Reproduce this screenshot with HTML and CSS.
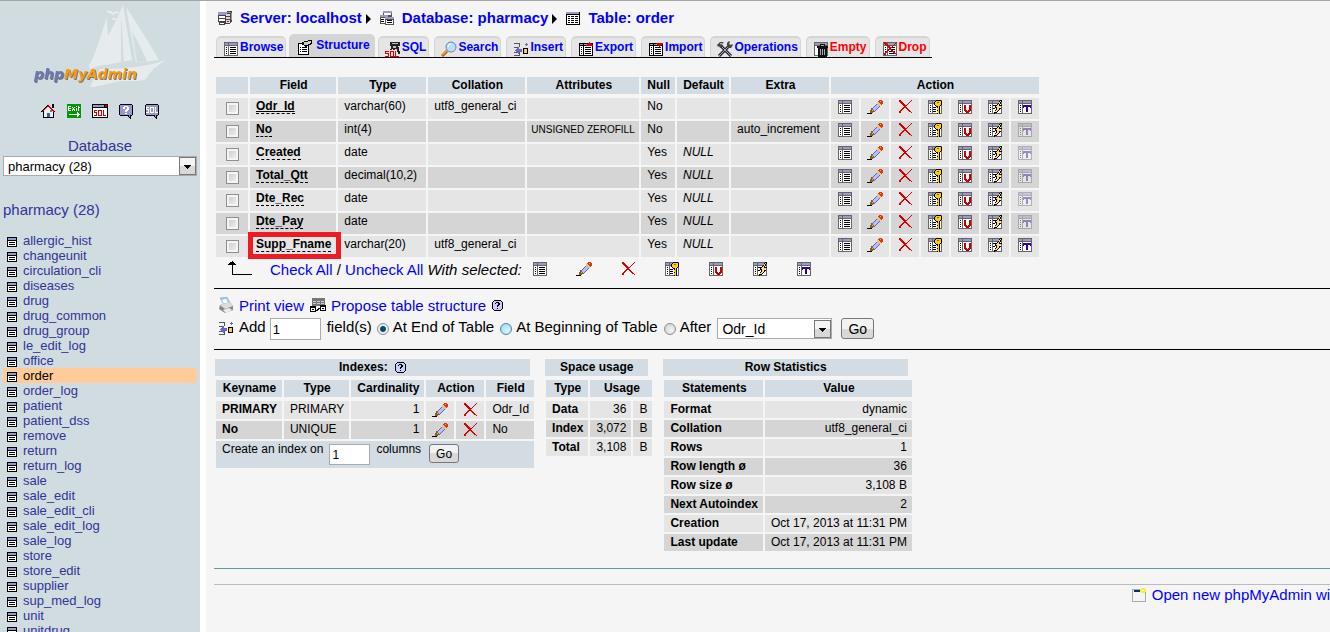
FILE: index.html
```html
<!DOCTYPE html>
<html lang="en">
<head>
  <meta charset="UTF-8">
  <meta name="viewport" content="width=device-width, initial-scale=1.0">
  <title>localhost / pharmacy / order | phpMyAdmin</title>
  <link rel="stylesheet" href="styles.css">
</head>
<body>
  <!-- icon set -->
  <svg class="sprite" aria-hidden="true">
    <symbol id="grid" viewBox="0 0 16 16">
      <path fill="#666" d="M1 1h14v14H1z"/>
      <path fill="#99c" d="M2 2h3v2H2zM6 2h8v2H6z"/>
      <path fill="#fff" d="M2 5h3v9H2zM6 5h8v9H6z"/>
      <path fill="#000" d="M3 6h1v1H3zM3 8h1v1H3zM3 10h1v1H3zM3 12h1v1H3z"/>
    </symbol>
    <symbol id="browse" viewBox="0 0 16 16">
      <use href="#grid"/>
      <path fill="#000" d="M7 6h6v1H7zM7 8h6v1H7zM7 10h6v1H7zM7 12h6v1H7z"/>
    </symbol>
    <symbol id="edit" viewBox="0 0 16 16">
      <path fill="#000" d="M0 14h5v1H0zM3 12h1v2H3z"/>
      <path fill="#856010" d="M4 9h1v1h1v1h1v1h1v1H6v1H3v-3h1z"/>
      <path fill="#e8b84c" d="M5 11h1v1H5z"/>
      <path fill="#669" d="M10 3h1v1h1v1h1v1h1v1h-1v1h-1v1h-1v1h-1v1H9v1H8v1H7v-1H6v-1H5V9h1V8h1V7h1V6h1V5h1z"/>
      <path fill="#bbf" d="M10 4h1v1h1v1h1v1h-1v1h-1v1h-1v1H9v1H8v1H7v-1H6V9h1V8h1V7h1V6h1z"/>
      <path fill="#fc3" d="M11 2h1v1h1v1h1v1h1v1h-1v1h-1V6h-1V5h-1V4h-1V3h1z"/>
      <path fill="#d43a1a" d="M12 1h3v1h1v3h-1v1h-1V5h-1V4h-1V3h-1V2h1z"/>
      <path fill="#f98" d="M13 2h1v1h-1z"/>
    </symbol>
    <symbol id="drop" viewBox="0 0 16 16">
      <path fill="#d00" d="M2 1h2v1h1v1h1v1h1v1h1v1h2V5h1V4h1V3h1V2h1V1h1v1h-1v1h-1v1h-1v1h-1v1h-1v1H9v1h1v1h1v1h1v1h1v1h1v1h-2v-1h-1v-1h-1v-1H9v-1H8V9H7v1H6v1H5v1H4v2H2v-2h1v-1h1v-1h1V9h1V8h1V7H6V6H5V5H4V4H3V3H2z"/>
      <path fill="#d00" d="M14 13h1v1h-1z"/>
    </symbol>
    <symbol id="primary" viewBox="0 0 16 16">
      <use href="#grid"/>
      <path fill="#000" d="M6 8h3v1H6zM6 10h3v1H6zM6 12h3v1H6z"/>
      <path fill="#000" d="M9 1h5v1h1v4h-1v1h-1v8h-3v-7H9V7H8V6H7V3h1V2h1z"/>
      <path fill="#fc0" d="M9 2h5v4h-1v1h-1v8h-1v-1h-1v-2h1v-1h-1V9h1V7H9V6H8V3h1z"/>
      <path fill="#856010" d="M10 3h2v1h-2z"/>
    </symbol>
    <symbol id="unique" viewBox="0 0 16 16">
      <use href="#grid"/>
      <path fill="#c00" d="M7 6h2v5h1v1h1v-1h1V6h2v6h-1v1h-1v1H9v-1H8v-1H7z"/>
    </symbol>
    <symbol id="index" viewBox="0 0 16 16">
      <use href="#grid"/>
      <path fill="#000" d="M6 6h4v1H6zM6 9h2v1H6z"/>
      <path fill="#000" d="M13 1h2v2h-1v2h-1v1h2v1h-1v1h-1v1h1v1h-1v1h-1v1h-1v1h-1v1H8v1H7v-2h1v-2h1V9H8V7h1V6h1V5h1V4h1V2h1z"/>
      <path fill="#fd6" d="M13 2h1v1h-1v2h-1v2h2v1h-1v1h-1v2h-1v1h-1v1H8v-1h1v-1h1V8H9V7h1V6h1V5h1V3h1z"/>
    </symbol>
    <symbol id="fulltext" viewBox="0 0 16 16">
      <use href="#grid"/>
      <path fill="#309" d="M6 6h8v3h-1V8h-2v5H9V8H7v1H6z"/>
    </symbol>
    <symbol id="table" viewBox="0 0 16 16">
      <path fill="#000" d="M1 2h14v13H1z"/>
      <path fill="#99c" d="M1 2h13v2H1z"/>
      <path fill="#fff" d="M2 5h12v9H2z"/>
      <path fill="#000" d="M3 6h2v1H3zM6 6h3v1H6zM10 6h3v1h-3zM3 8h2v1H3zM6 8h3v1H6zM10 8h3v1h-3zM3 10h2v1H3zM6 10h3v1H6zM10 10h3v1h-3zM3 12h2v1H3zM6 12h3v1H6zM10 12h3v1h-3z"/>
    </symbol>
    <symbol id="server" viewBox="0 0 16 16">
      <path fill="#444" d="M1 5h9v7H1zM2 12h6v3H2zM8 3l2-2h5v10l-2 3H8z"/>
      <path fill="#99c" d="M1 2h9v3H1z"/>
      <path fill="#fff" d="M2 6h6v2H2zM2 9h6v2H2zM3 13h4v1H3z"/>
      <path fill="#ddd" d="M9 4h4v2H9zM9 7h4v2H9zM9 10h4v3H9z"/>
      <path fill="#999" d="M10 2h4v1h-4zM14 3h1v7h-1z"/>
      <path fill="#e00" d="M10 11h2v1h-2z"/>
    </symbol>
    <symbol id="database" viewBox="0 0 16 16">
      <path fill="#555" d="M4 1h9v7H4zM1 5h9v9H1zM6 7h9v8H6z"/>
      <path fill="#99c" d="M4 1h9v2H4zM1 5h8v2H1zM6 7h9v2H6z"/>
      <path fill="#fff" d="M5 3h7v2H5zM2 8h4v5H2zM7 10h7v4H7z"/>
      <path fill="#000" d="M2 9h3v1H2zM2 11h3v1H2zM8 10h5v1H8zM8 12h5v1H8z"/>
    </symbol>
    <symbol id="props" viewBox="0 0 16 16">
      <path fill="#000" d="M1 4h11v12H1z"/>
      <path fill="#fff" d="M2 5h9v10H2z"/>
      <path fill="#000" d="M3 8h1v1H3zM5 8h5v1H5zM3 10h1v1H3zM5 10h5v1H5zM3 12h1v1H3zM5 12h5v1H5zM5 3h2V2h4V1h4v4h-1v1h-2v1h-2v1H8V7H7V6H5z"/>
      <path fill="#ccc" d="M7 3h4V2h3v2h-1v1h-2v1H7z"/>
    </symbol>
    <symbol id="sql" viewBox="0 0 16 16">
      <path fill="#222" d="M5 1h10v4h-2v1h1v4h1v3h-2v-2h-1V8h-2v3H8V8H7v3H5V8h1V5H5z"/>
      <path fill="#bbc" d="M7 2h6v1H7zM8 5h3v2H8zM11 8h1v2h-1z"/>
      <path fill="#e5e5e5" d="M0 9h12v7H0z"/>
      <path fill="#d00" d="M0 10h4v1H1v1h3v4H0v-1h3v-2H0zM5 10h4v5h1v1H5zM6 11v4h2v-4zM10 10h1v5h3v1h-4z"/>
    </symbol>
    <symbol id="search" viewBox="0 0 16 16">
      <path stroke="#9b5a1b" stroke-width="3" d="M1 15l5-5"/>
      <path stroke="#f93" stroke-width="2" d="M1 14l5-5"/>
      <circle cx="10" cy="6" r="5" fill="#bdf" stroke="#68a"/>
      <path fill="none" stroke="#fff" d="M7 6q0-3 3-3"/>
    </symbol>
    <symbol id="insert" viewBox="0 0 16 16">
      <path fill="#555" d="M1 2h6v1H1zM6 2h1v4H6zM1 6h5v1H1zM1 14h6v1H1zM6 11h1v4H6zM1 11h4v1H1z"/>
      <path fill="#66c" d="M2 9h1V8h1V7h1V6h1v2h3v3H6v2H5v-1H4v-1H3v-1H2z"/>
      <path fill="#000" d="M10 7h5v6h-5z"/>
      <path fill="#fc3" d="M11 8h3v4h-3z"/>
      <path fill="#66c" d="M12 3h3v1h-3zM13 2h1v3h-1z"/>
    </symbol>
    <symbol id="sheet" viewBox="0 0 16 16">
      <path fill="#000" d="M1 2h14v13H1z"/>
      <path fill="#99c" d="M2 3h3v1H2zM6 3h8v1H6z"/>
      <path fill="#fff" d="M2 5h3v9H2zM6 5h8v9H6z"/>
      <path fill="#000" d="M3 6h1v1H3zM3 8h1v1H3zM3 10h1v1H3zM3 12h1v1H3zM7 6h6v1H7zM7 8h6v1H7zM7 10h6v1H7zM7 12h6v1H7z"/>
    </symbol>
    <symbol id="export" viewBox="0 0 16 16">
      <use href="#sheet"/>
      <path fill="#c00" d="M11 1h1v1h1v1h1v1h1v1H8V4h1V3h1V2h1z"/>
    </symbol>
    <symbol id="import" viewBox="0 0 16 16">
      <use href="#sheet"/>
      <path fill="#c00" d="M8 2h7v1h-1v1h-1v1h-1v1h-1V5h-1V4H9V3H8z"/>
    </symbol>
    <symbol id="ops" viewBox="0 0 16 16">
      <path fill="none" stroke="#223" stroke-width="3" d="M2 15L12 5M4 5l10 10"/>
      <path fill="none" stroke="#aac" d="M2 15L12 5M5 6l9 9"/>
      <path fill="#444" d="M0 4l3-3h4L5 3l1 2-3 2-1-2-1 1zM10 2l2-2 1 1-1 2 2 1 1-1 1 1-2 3h-3l-1-2z"/>
      <path fill="#ccd" d="M3 2h2L4 4z"/>
    </symbol>
    <symbol id="empty" viewBox="0 0 16 16">
      <path fill="#666" d="M1 1h14v14H1z"/>
      <path fill="#99c" d="M2 2h12v2H2z"/>
      <path fill="#fff" d="M2 5h3v9H2z"/>
      <path fill="#111" d="M4 5h11v2H4zM7 3h5v2H7zM5 7h9v9H5z"/>
      <path fill="#aaa" d="M8 4h3v1H8zM7 8h1v6H7zM9 8h1v6H9zM11 8h1v6h-1z"/>
    </symbol>
    <symbol id="help" viewBox="0 0 11 11">
      <path fill="#000" d="M2 0h7v1h1v1h1v7h-1v1H9v1H2v-1H1V9H0V2h1V1h1z"/>
      <path fill="#ccf" d="M2 1h7v1h1v7H9v1H2V9H1V2h1z"/>
      <path fill="#000" d="M4 2h3v1h1v2H7v1H6v1H5V5h1V3H4v1H3V3h1zM5 8h1v1H5z"/>
    </symbol>
    <symbol id="home" viewBox="0 0 16 16">
      <path fill="#000" d="M3 8h11v7H3z"/>
      <path fill="#eee" d="M8 4l5 5v5H4V8z"/>
      <path fill="#000" d="M8 1l7 8h-1L8 3 2 9H1zM12 1h2v4h-2z"/>
      <path fill="#c00" d="M8 2l6 6v1L8 4 2 9V8z"/>
      <path fill="#369" d="M7 10h3v4H7z"/>
      <path fill="#777" d="M10 7h2v2h-2z"/>
    </symbol>
    <symbol id="exit" viewBox="0 0 16 16">
      <path fill="#090" d="M1 1h14v14H1z"/>
      <path fill="#fff" d="M2 3h3v1H3v1h2v1H3v1h2v1H2zM6 4h1v1h1V4h1v1H8v1h1v2H8V7H7v1H6V6h1V5H6zM10 3h1v1h-1zM10 5h1v3h-1zM12 3h1v1h1v1h-1v3h-1zM3 11h8V9h1v1h1v1h1v1h-1v1h-1v1h-1v-2H3z"/>
    </symbol>
    <symbol id="sqlwin" viewBox="0 0 16 16">
      <path fill="#000" d="M0 1h16v14H0z"/>
      <path fill="#99c" d="M1 2h11v2H1z"/>
      <path fill="#fff" d="M1 5h14v9H1z"/>
      <path fill="#c00" d="M13 2h2v2h-2zM2 7h3v1H3v1h2v4H2v-1h2v-2H2zM6 7h4v6H6zM11 7h1v5h2v1h-3z"/>
      <path fill="#fff" d="M7 8h2v4H7z"/>
    </symbol>
    <symbol id="bubble" viewBox="0 0 16 16">
      <path fill="#000" d="M2 1h12v1h1v10h-1v1h-1v3h-1v-1h-1v-1h-1v-1H2v-1H1V2h1z"/>
      <path fill="#99c" d="M2 2h12v10h-2v2h-1v-2H2z"/>
    </symbol>
    <symbol id="docs" viewBox="0 0 16 16">
      <use href="#bubble"/>
      <path fill="#fff" d="M6 3h4v1h1v3h-1v1H9v1H7V7h1V6h1V4H7v2H5V4h1zM7 10h2v1H7z"/>
    </symbol>
    <symbol id="sqldocs" viewBox="0 0 16 16">
      <use href="#bubble"/>
      <path fill="#fff" d="M2 4h3v1H3v1h2v4H2V9h2V7H2zM6 4h4v6H6zM11 4h1v5h2v1h-3z"/>
      <path fill="#99c" d="M7 5h2v4H7z"/>
    </symbol>
    <symbol id="navtable" viewBox="0 0 10 10">
      <path fill="#000" d="M0 0h10v10H0z"/>
      <path fill="#99c" d="M1 1h8v2H1z"/>
      <path fill="#fff" d="M1 4h8v5H1z"/>
      <path fill="#000" d="M2 5h6v1H2zM2 7h6v1H2z"/>
    </symbol>
    <symbol id="print" viewBox="0 0 16 16">
      <path fill="#9cf" stroke="#79b" stroke-width=".5" d="M2 1l7-1 3 6-6 2z"/>
      <path fill="#fff" d="M4 3l4-1 2 4-4 1z"/>
      <path fill="#888" d="M2 8l10-3 3 4v4l-8 3-6-4z"/>
      <path fill="#ddd" d="M2 8l10-3 3 4-8 3z"/>
      <path fill="#eee" d="M5 13l6-2 3 2-6 3z"/>
    </symbol>
    <symbol id="propose" viewBox="0 0 16 16">
      <path fill="#777" d="M2 1h13v8H2z"/>
      <path fill="#ccc" d="M3 4h3v1H3zM7 4h3v1H7zM11 4h3v1h-3zM3 6h3v1H3zM7 6h3v1H7zM11 6h3v1h-3z"/>
      <path fill="#000" d="M0 9h6v6H0zM10 8h6v6h-6zM6 13h2v1H6zM8 11h2v1H8zM7 12h2v1H7z"/>
      <path fill="#fff" d="M1 11h4v3H1zM11 10h4v3h-4z"/>
      <path fill="#000" d="M2 12h2v1H2zM12 11h2v1h-2z"/>
    </symbol>
    <symbol id="newwin" viewBox="0 0 16 16">
      <path fill="#aaa" d="M1 2h14v13H1z"/>
      <path fill="#f4f4f4" d="M2 3h12v11H2z"/>
      <path fill="#036" d="M3 3h8v2H3z"/>
      <path fill="#fe3" d="M10 1h4v1h1v3h-1v1h-4V5H9V2h1z"/>
      <path fill="#fff" d="M11 3h2v1h-2z"/>
    </symbol>
  </svg>

  <nav class="sidebar">
    <a class="logo" href="#" aria-label="phpMyAdmin home">
      <svg width="136" height="84" viewBox="0 0 136 84">
        <g fill="#e6ecee">
          <path d="M73 14l2 46-20 6q10-26 18-52zM89 2l9 55-26 5-18 1Q76 34 89 2zM92 4q16 24 33 53l-23 3zM66 66q40 0 66-9-14 8-20 19-6 3-25 2l-32 7z"/>
        </g>
        <path fill="#d0dce0" d="M98 28l5 32 10-2q-7-16-15-30zM87 8l3 54-3 1z"/>
        <path fill="none" stroke="#e6ecee" stroke-width="2" d="M73 9q4-1 6 2 3-3 6-1M78 16q3-1 5 2 3-3 7-1"/>
        <text class="logo-php" x="0" y="76">php<tspan class="logo-my">MyAdmin</tspan></text>
      </svg>
    </a>
    <div class="nav-icons">
      <a href="#" aria-label="Home"><svg class="icon"><use href="#home"/></svg></a>
      <a href="#" aria-label="Log out"><svg class="icon"><use href="#exit"/></svg></a>
      <a href="#" aria-label="Query window"><svg class="icon"><use href="#sqlwin"/></svg></a>
      <a href="#" aria-label="phpMyAdmin documentation"><svg class="icon"><use href="#docs"/></svg></a>
      <a href="#" aria-label="MySQL documentation"><svg class="icon"><use href="#sqldocs"/></svg></a>
    </div>
    <label class="db-label" for="db">Database</label>
    <select id="db" class="db-select"><option>pharmacy (28)</option></select>
    <a class="db-name" href="#">pharmacy (28)</a>
    <ul class="table-list">
      <li><svg class="nav-icon"><use href="#navtable"/></svg><a href="#">allergic_hist</a></li>
      <li><svg class="nav-icon"><use href="#navtable"/></svg><a href="#">changeunit</a></li>
      <li><svg class="nav-icon"><use href="#navtable"/></svg><a href="#">circulation_cli</a></li>
      <li><svg class="nav-icon"><use href="#navtable"/></svg><a href="#">diseases</a></li>
      <li><svg class="nav-icon"><use href="#navtable"/></svg><a href="#">drug</a></li>
      <li><svg class="nav-icon"><use href="#navtable"/></svg><a href="#">drug_common</a></li>
      <li><svg class="nav-icon"><use href="#navtable"/></svg><a href="#">drug_group</a></li>
      <li><svg class="nav-icon"><use href="#navtable"/></svg><a href="#">le_edit_log</a></li>
      <li><svg class="nav-icon"><use href="#navtable"/></svg><a href="#">office</a></li>
      <li class="current"><svg class="nav-icon"><use href="#navtable"/></svg><a href="#">order</a></li>
      <li><svg class="nav-icon"><use href="#navtable"/></svg><a href="#">order_log</a></li>
      <li><svg class="nav-icon"><use href="#navtable"/></svg><a href="#">patient</a></li>
      <li><svg class="nav-icon"><use href="#navtable"/></svg><a href="#">patient_dss</a></li>
      <li><svg class="nav-icon"><use href="#navtable"/></svg><a href="#">remove</a></li>
      <li><svg class="nav-icon"><use href="#navtable"/></svg><a href="#">return</a></li>
      <li><svg class="nav-icon"><use href="#navtable"/></svg><a href="#">return_log</a></li>
      <li><svg class="nav-icon"><use href="#navtable"/></svg><a href="#">sale</a></li>
      <li><svg class="nav-icon"><use href="#navtable"/></svg><a href="#">sale_edit</a></li>
      <li><svg class="nav-icon"><use href="#navtable"/></svg><a href="#">sale_edit_cli</a></li>
      <li><svg class="nav-icon"><use href="#navtable"/></svg><a href="#">sale_edit_log</a></li>
      <li><svg class="nav-icon"><use href="#navtable"/></svg><a href="#">sale_log</a></li>
      <li><svg class="nav-icon"><use href="#navtable"/></svg><a href="#">store</a></li>
      <li><svg class="nav-icon"><use href="#navtable"/></svg><a href="#">store_edit</a></li>
      <li><svg class="nav-icon"><use href="#navtable"/></svg><a href="#">supplier</a></li>
      <li><svg class="nav-icon"><use href="#navtable"/></svg><a href="#">sup_med_log</a></li>
      <li><svg class="nav-icon"><use href="#navtable"/></svg><a href="#">unit</a></li>
      <li><svg class="nav-icon"><use href="#navtable"/></svg><a href="#">unitdrug</a></li>
    </ul>
  </nav>

  <main class="content">
    <div class="breadcrumb">
      <svg class="icon"><use href="#server"/></svg><a href="#">Server: localhost</a><span class="arrow"></span>
      <svg class="icon"><use href="#database"/></svg><a href="#">Database: pharmacy</a><span class="arrow"></span>
      <svg class="icon"><use href="#table"/></svg><a href="#">Table: order</a>
    </div>

    <div class="tabs">
      <a class="tab" href="#"><svg class="icon"><use href="#browse"/></svg>Browse</a>
      <a class="tab active" href="#"><svg class="icon"><use href="#props"/></svg>Structure</a>
      <a class="tab" href="#"><svg class="icon"><use href="#sql"/></svg>SQL</a>
      <a class="tab" href="#"><svg class="icon smooth"><use href="#search"/></svg>Search</a>
      <a class="tab" href="#"><svg class="icon"><use href="#insert"/></svg>Insert</a>
      <a class="tab" href="#"><svg class="icon"><use href="#export"/></svg>Export</a>
      <a class="tab" href="#"><svg class="icon"><use href="#import"/></svg>Import</a>
      <a class="tab" href="#"><svg class="icon smooth"><use href="#ops"/></svg>Operations</a>
      <a class="tab caution" href="#"><svg class="icon"><use href="#empty"/></svg>Empty</a>
      <a class="tab caution" href="#"><svg class="icon"><use href="#browse"/><use href="#drop"/></svg>Drop</a>
    </div>

    <table class="data structure">
      <thead>
        <tr>
          <th class="col-check"></th>
          <th class="col-field">Field</th>
          <th class="col-type">Type</th>
          <th class="col-coll">Collation</th>
          <th class="col-attr">Attributes</th>
          <th class="col-null">Null</th>
          <th class="col-def">Default</th>
          <th class="col-extra">Extra</th>
          <th colspan="7">Action</th>
        </tr>
      </thead>
      <tbody>
        <tr>
          <td><input type="checkbox" id="f1"></td>
          <th><label class="primary" for="f1">Odr_Id</label></th>
          <td>varchar(60)</td><td>utf8_general_ci</td><td></td><td>No</td><td></td><td></td>
          <td class="act"><a href="#" aria-label="Browse"><svg class="icon"><use href="#browse"/></svg></a></td>
          <td class="act"><a href="#" aria-label="Change"><svg class="icon"><use href="#edit"/></svg></a></td>
          <td class="act"><a href="#" aria-label="Drop"><svg class="icon"><use href="#drop"/></svg></a></td>
          <td class="act"><a href="#" aria-label="Primary"><svg class="icon"><use href="#primary"/></svg></a></td>
          <td class="act"><a href="#" aria-label="Unique"><svg class="icon"><use href="#unique"/></svg></a></td>
          <td class="act"><a href="#" aria-label="Index"><svg class="icon"><use href="#index"/></svg></a></td>
          <td class="act"><a href="#" aria-label="Fulltext"><svg class="icon"><use href="#fulltext"/></svg></a></td>
        </tr>
        <tr>
          <td><input type="checkbox" id="f2"></td>
          <th><label for="f2">No</label></th>
          <td>int(4)</td><td></td><td class="attr">UNSIGNED ZEROFILL</td><td>No</td><td></td><td>auto_increment</td>
          <td class="act"><a href="#" aria-label="Browse"><svg class="icon"><use href="#browse"/></svg></a></td>
          <td class="act"><a href="#" aria-label="Change"><svg class="icon"><use href="#edit"/></svg></a></td>
          <td class="act"><a href="#" aria-label="Drop"><svg class="icon"><use href="#drop"/></svg></a></td>
          <td class="act"><a href="#" aria-label="Primary"><svg class="icon"><use href="#primary"/></svg></a></td>
          <td class="act"><a href="#" aria-label="Unique"><svg class="icon"><use href="#unique"/></svg></a></td>
          <td class="act"><a href="#" aria-label="Index"><svg class="icon"><use href="#index"/></svg></a></td>
          <td class="act"><svg class="icon off"><use href="#fulltext"/></svg></td>
        </tr>
        <tr>
          <td><input type="checkbox" id="f3"></td>
          <th><label for="f3">Created</label></th>
          <td>date</td><td></td><td></td><td>Yes</td><td><i>NULL</i></td><td></td>
          <td class="act"><a href="#" aria-label="Browse"><svg class="icon"><use href="#browse"/></svg></a></td>
          <td class="act"><a href="#" aria-label="Change"><svg class="icon"><use href="#edit"/></svg></a></td>
          <td class="act"><a href="#" aria-label="Drop"><svg class="icon"><use href="#drop"/></svg></a></td>
          <td class="act"><a href="#" aria-label="Primary"><svg class="icon"><use href="#primary"/></svg></a></td>
          <td class="act"><a href="#" aria-label="Unique"><svg class="icon"><use href="#unique"/></svg></a></td>
          <td class="act"><a href="#" aria-label="Index"><svg class="icon"><use href="#index"/></svg></a></td>
          <td class="act"><svg class="icon off"><use href="#fulltext"/></svg></td>
        </tr>
        <tr>
          <td><input type="checkbox" id="f4"></td>
          <th><label for="f4">Total_Qtt</label></th>
          <td>decimal(10,2)</td><td></td><td></td><td>Yes</td><td><i>NULL</i></td><td></td>
          <td class="act"><a href="#" aria-label="Browse"><svg class="icon"><use href="#browse"/></svg></a></td>
          <td class="act"><a href="#" aria-label="Change"><svg class="icon"><use href="#edit"/></svg></a></td>
          <td class="act"><a href="#" aria-label="Drop"><svg class="icon"><use href="#drop"/></svg></a></td>
          <td class="act"><a href="#" aria-label="Primary"><svg class="icon"><use href="#primary"/></svg></a></td>
          <td class="act"><a href="#" aria-label="Unique"><svg class="icon"><use href="#unique"/></svg></a></td>
          <td class="act"><a href="#" aria-label="Index"><svg class="icon"><use href="#index"/></svg></a></td>
          <td class="act"><svg class="icon off"><use href="#fulltext"/></svg></td>
        </tr>
        <tr>
          <td><input type="checkbox" id="f5"></td>
          <th><label for="f5">Dte_Rec</label></th>
          <td>date</td><td></td><td></td><td>Yes</td><td><i>NULL</i></td><td></td>
          <td class="act"><a href="#" aria-label="Browse"><svg class="icon"><use href="#browse"/></svg></a></td>
          <td class="act"><a href="#" aria-label="Change"><svg class="icon"><use href="#edit"/></svg></a></td>
          <td class="act"><a href="#" aria-label="Drop"><svg class="icon"><use href="#drop"/></svg></a></td>
          <td class="act"><a href="#" aria-label="Primary"><svg class="icon"><use href="#primary"/></svg></a></td>
          <td class="act"><a href="#" aria-label="Unique"><svg class="icon"><use href="#unique"/></svg></a></td>
          <td class="act"><a href="#" aria-label="Index"><svg class="icon"><use href="#index"/></svg></a></td>
          <td class="act"><svg class="icon off"><use href="#fulltext"/></svg></td>
        </tr>
        <tr>
          <td><input type="checkbox" id="f6"></td>
          <th><label for="f6">Dte_Pay</label></th>
          <td>date</td><td></td><td></td><td>Yes</td><td><i>NULL</i></td><td></td>
          <td class="act"><a href="#" aria-label="Browse"><svg class="icon"><use href="#browse"/></svg></a></td>
          <td class="act"><a href="#" aria-label="Change"><svg class="icon"><use href="#edit"/></svg></a></td>
          <td class="act"><a href="#" aria-label="Drop"><svg class="icon"><use href="#drop"/></svg></a></td>
          <td class="act"><a href="#" aria-label="Primary"><svg class="icon"><use href="#primary"/></svg></a></td>
          <td class="act"><a href="#" aria-label="Unique"><svg class="icon"><use href="#unique"/></svg></a></td>
          <td class="act"><a href="#" aria-label="Index"><svg class="icon"><use href="#index"/></svg></a></td>
          <td class="act"><svg class="icon off"><use href="#fulltext"/></svg></td>
        </tr>
        <tr>
          <td><input type="checkbox" id="f7"></td>
          <th class="marked"><label for="f7">Supp_Fname</label></th>
          <td>varchar(20)</td><td>utf8_general_ci</td><td></td><td>Yes</td><td><i>NULL</i></td><td></td>
          <td class="act"><a href="#" aria-label="Browse"><svg class="icon"><use href="#browse"/></svg></a></td>
          <td class="act"><a href="#" aria-label="Change"><svg class="icon"><use href="#edit"/></svg></a></td>
          <td class="act"><a href="#" aria-label="Drop"><svg class="icon"><use href="#drop"/></svg></a></td>
          <td class="act"><a href="#" aria-label="Primary"><svg class="icon"><use href="#primary"/></svg></a></td>
          <td class="act"><a href="#" aria-label="Unique"><svg class="icon"><use href="#unique"/></svg></a></td>
          <td class="act"><a href="#" aria-label="Index"><svg class="icon"><use href="#index"/></svg></a></td>
          <td class="act"><a href="#" aria-label="Fulltext"><svg class="icon"><use href="#fulltext"/></svg></a></td>
        </tr>
      </tbody>
    </table>

    <div class="selected-row">
      <svg class="arrow-up" width="38" height="22" viewBox="0 0 38 22"><path d="M8 3h1v1h1v1h1v1h1v1H9v9h19v1H8V7H4V6h1V5h1V4h2z"/></svg>
      <span><a href="#">Check All</a> / <a href="#">Uncheck All</a> <i>With selected:</i></span>
      <div class="bulk">
        <button type="button" aria-label="Browse"><svg class="icon"><use href="#browse"/></svg></button>
        <button type="button" aria-label="Change"><svg class="icon"><use href="#edit"/></svg></button>
        <button type="button" aria-label="Drop"><svg class="icon"><use href="#drop"/></svg></button>
        <button type="button" aria-label="Primary"><svg class="icon"><use href="#primary"/></svg></button>
        <button type="button" aria-label="Unique"><svg class="icon"><use href="#unique"/></svg></button>
        <button type="button" aria-label="Index"><svg class="icon"><use href="#index"/></svg></button>
        <button type="button" aria-label="Fulltext"><svg class="icon"><use href="#fulltext"/></svg></button>
      </div>
    </div>

    <section class="tools">
      <div class="tool-links">
        <svg class="icon smooth"><use href="#print"/></svg><a href="#">Print view</a>
        <svg class="icon"><use href="#propose"/></svg><a href="#">Propose table structure</a>
        <a class="help-link" href="#" aria-label="Documentation"><svg class="help"><use href="#help"/></svg></a>
      </div>
      <form class="add-form">
        <svg class="icon"><use href="#insert"/></svg>
        <label for="num">Add</label>
        <input type="text" id="num" class="num" value="1">
        <span class="fields">field(s)</span>
        <input type="radio" name="where" id="w1" checked><label for="w1">At End of Table</label>
        <input type="radio" name="where" id="w2" class="hot"><label for="w2">At Beginning of Table</label>
        <input type="radio" name="where" id="w3"><label for="w3">After</label>
        <select class="after" aria-label="After field"><option>Odr_Id</option></select>
        <button type="button" class="go">Go</button>
      </form>
    </section>

    <section class="stats">
      <table class="data indexes">
        <caption>Indexes: <a href="#" aria-label="Documentation"><svg class="help"><use href="#help"/></svg></a></caption>
        <thead>
          <tr><th>Keyname</th><th>Type</th><th>Cardinality</th><th colspan="2">Action</th><th>Field</th></tr>
        </thead>
        <tbody>
          <tr>
            <th>PRIMARY</th><td>PRIMARY</td><td class="value">1</td>
            <td class="act"><a href="#" aria-label="Edit"><svg class="icon"><use href="#edit"/></svg></a></td>
            <td class="act"><a href="#" aria-label="Drop"><svg class="icon"><use href="#drop"/></svg></a></td>
            <td>Odr_Id</td>
          </tr>
          <tr>
            <th>No</th><td>UNIQUE</td><td class="value">1</td>
            <td class="act"><a href="#" aria-label="Edit"><svg class="icon"><use href="#edit"/></svg></a></td>
            <td class="act"><a href="#" aria-label="Drop"><svg class="icon"><use href="#drop"/></svg></a></td>
            <td>No</td>
          </tr>
        </tbody>
        <tfoot>
          <tr>
            <td colspan="6">
              <form class="index-form">
                <label for="cols">Create an index on</label>
                <input type="text" id="cols" class="cols" value="1">
                <span>columns</span>
                <button type="button" class="go small">Go</button>
              </form>
            </td>
          </tr>
        </tfoot>
      </table>

      <table class="data">
        <caption>Space usage</caption>
        <thead><tr><th>Type</th><th colspan="2">Usage</th></tr></thead>
        <tbody>
          <tr><th>Data</th><td class="value">36</td><td>B</td></tr>
          <tr><th>Index</th><td class="value">3,072</td><td>B</td></tr>
          <tr><th>Total</th><td class="value">3,108</td><td>B</td></tr>
        </tbody>
      </table>

      <table class="data">
        <caption>Row Statistics</caption>
        <thead><tr><th>Statements</th><th>Value</th></tr></thead>
        <tbody>
          <tr><th>Format</th><td class="value">dynamic</td></tr>
          <tr><th>Collation</th><td class="value">utf8_general_ci</td></tr>
          <tr><th>Rows</th><td class="value">1</td></tr>
          <tr><th>Row length ø</th><td class="value">36</td></tr>
          <tr><th>Row size ø</th><td class="value">3,108 B</td></tr>
          <tr><th>Next Autoindex</th><td class="value">2</td></tr>
          <tr><th>Creation</th><td class="value">Oct 17, 2013 at 11:31 PM</td></tr>
          <tr><th>Last update</th><td class="value">Oct 17, 2013 at 11:31 PM</td></tr>
        </tbody>
      </table>
    </section>

    <hr class="end">
    <footer class="footer">
      <svg class="icon"><use href="#newwin"/></svg><a href="#">Open new phpMyAdmin window</a>
    </footer>
  </main>
</body>
</html>
```
FILE: styles.css
```css
body {
  display: flex;
  height: 100vh;
  margin: 0;
  box-sizing: border-box;
  border-top: 1px solid #a6a6a6;
  overflow: hidden;
  background: #fff;
  color: #000;
  font-family: "Liberation Sans", Arial, sans-serif;
  font-size: 15px;
}
a {
  color: #00f;
  text-decoration: none;
}
.sprite {
  position: absolute;
  width: 0;
  height: 0;
}
.icon {
  display: block;
  flex: none;
  width: 16px;
  height: 16px;
  shape-rendering: crispEdges;
}
.icon.smooth {
  shape-rendering: auto;
}
.icon.off {
  opacity: 0.4;
}
.help {
  width: 11px;
  height: 11px;
  shape-rendering: crispEdges;
}

/* left frame */
.sidebar {
  display: flex;
  flex-direction: column;
  flex: none;
  width: 200px;
  margin-right: 6px;
  padding: 0 3px;
  box-sizing: border-box;
  overflow: hidden;
  background: #d0dce0;
}
.sidebar a, .db-label {
  color: #333399;
}
.logo {
  flex: none;
  padding: 2px 0 0 31px;
}
.logo svg {
  display: block;
}
.logo text {
  font: italic bold 14px "DejaVu Sans", sans-serif;
  filter: drop-shadow(1px 1px 0 #778);
}
.logo-php {
  fill: #6c78af;
}
.logo-my {
  fill: #f89c0e;
}
.nav-icons {
  display: flex;
  justify-content: center;
  gap: 10px;
  margin-top: 16px;
}
.db-label {
  margin-top: 17px;
  font-size: 15px;
  line-height: 20px;
  text-align: center;
}
select {
  appearance: none;
  box-sizing: border-box;
  height: 20px;
  padding: 0 20px 0 4px;
  border: 1px solid #aaa;
  border-radius: 0;
  background: #fff url("data:image/svg+xml,%3Csvg xmlns='http://www.w3.org/2000/svg' width='17' height='18'%3E%3Cpath fill='%23777' d='M0 0h17v18H0z'/%3E%3Cpath fill='%23f4f4f4' d='M1 1h15v8H1z'/%3E%3Cpath fill='%23d8d8d8' d='M1 9h15v8H1z'/%3E%3Cpath d='M5 8h7v1h-1v1h-1v1H9v1H8v-1H7v-1H6V9H5z'/%3E%3C/svg%3E") right center no-repeat;
  color: #000;
  font-family: inherit;
}
.db-select {
  flex: none;
  width: 100%;
  font-size: 13px;
}
.db-name {
  margin-top: 24px;
  font-size: 15px;
  line-height: 20px;
}
.table-list {
  margin: 13px 0 0;
  padding: 0;
  list-style: none;
  font-size: 13px;
}
.table-list li {
  display: flex;
  align-items: flex-start;
  gap: 6px;
  height: 15px;
  padding-left: 4px;
  line-height: 15px;
}
.nav-icon {
  flex: none;
  width: 10px;
  height: 10px;
  margin-top: 4px;
  shape-rendering: crispEdges;
}
.table-list .current {
  background: #fc9;
}
.table-list .current a {
  color: #000;
}

/* right frame */
.content {
  flex: 1;
  min-width: 0;
  padding-left: 8px;
  overflow: hidden;
  background: #f5f5f5;
}
.breadcrumb {
  display: flex;
  align-items: center;
  padding: 7px 0 6px 3px;
  font-weight: bold;
  line-height: 20px;
}
.breadcrumb a {
  margin-left: 7px;
}
.arrow {
  width: 0;
  margin: 2px 8px 0 4px;
  border: 5px solid transparent;
  border-right: 0;
  border-left-color: #000;
}
.tabs {
  display: flex;
  align-items: flex-end;
  gap: 5px;
  width: fit-content;
  padding: 0 2px;
  border-bottom: 1px solid #000;
}
.tab {
  display: flex;
  gap: 1px;
  height: 21px;
  padding: 0 2px 0 6px;
  box-sizing: border-box;
  border: 1px solid #d5d5d5;
  border-top-width: 2px;
  border-bottom: 0;
  border-radius: 5px 5px 0 0;
  background: #e5e5e5;
  font-size: 12px;
  font-weight: bold;
  line-height: 18px;
}
.tab .icon {
  margin-top: 3px;
}
.tab.active {
  height: 23px;
  margin: 0 -2px;
  padding: 0 4px 0 7px;
  gap: 3px;
  background: #d5d5d5;
}
.tab.caution {
  color: #f00;
}

/* data tables */
.data {
  border-spacing: 2px;
  font-size: 12px;
  line-height: 15px;
}
.data caption {
  margin: 0 6px 2px 1px;
  padding: 1px 0;
  background: #d3dce3;
  font-weight: bold;
}
.data caption .help {
  margin-left: 4px;
  vertical-align: -2px;
}
.data th, .data td {
  padding: 1px 5px 1px 6px;
  text-align: left;
  vertical-align: top;
  white-space: nowrap;
}
.data thead th {
  height: 15px;
  border-bottom: 2px solid transparent;
  background: #d3dce3;
  background-clip: padding-box;
  text-align: center;
}
.data tbody tr:nth-child(odd) > * {
  background: #e5e5e5;
}
.data tbody tr:nth-child(even) > * {
  background: #d5d5d5;
}
.data td.value {
  text-align: right;
}
.data td.act {
  padding-right: 6px;
}
.data tfoot td {
  background: #d3dce3;
}
.structure {
  margin-top: 17px;
}
.structure tbody td {
  height: 19px;
}
.structure .col-check { width: 21px; }
.structure .col-field { width: 75px; }
.structure .col-type { width: 77px; }
.structure .col-coll { width: 86px; }
.structure .col-attr { width: 101px; }
.structure .col-null { width: 22px; }
.structure .col-def { width: 41px; }
.structure .col-extra { width: 87px; }
.structure td.attr {
  padding: 1px 4px;
  font-size: 10px;
}
.structure label {
  border-bottom: 1px dashed #000;
}
.structure label.primary {
  text-decoration: underline;
}
.structure .marked {
  position: relative;
}
.marked::after {
  content: "";
  position: absolute;
  inset: -4px -5px -2px -2px;
  border: 5px solid #ed1c24;
  pointer-events: none;
}

input[type="checkbox"] {
  appearance: none;
  display: block;
  width: 13px;
  height: 13px;
  margin: 3px auto 0;
  border: 1px solid #8e8f8f;
  background: linear-gradient(135deg, #c4c8ce, #f4f4f4);
  box-shadow: inset 0 0 0 2px #f4f4f4;
}
input[type="radio"] {
  appearance: none;
  flex: none;
  width: 12px;
  height: 12px;
  margin: 6px 4px 0 0;
  border: 1px solid #8e8f8f;
  border-radius: 50%;
  background: radial-gradient(circle at 60% 60%, #f4f4f4, #c8ccd0);
}
input[type="radio"]:checked {
  background: radial-gradient(circle, #0a4a6b 0 35%, #e8eef2 50%);
}
input[type="radio"].hot {
  border-color: #5586a3;
  background: radial-gradient(circle at 65% 65%, #dff4ff, #8dd4f8);
}
input[type="text"] {
  box-sizing: border-box;
  border: 1px solid #aaa;
  padding: 0 2px;
  background: #fff;
  font-family: inherit;
}

.selected-row {
  display: flex;
  align-items: center;
  height: 20px;
  padding-left: 10px;
}
.arrow-up {
  margin-right: 8px;
  shape-rendering: crispEdges;
}
.bulk {
  display: flex;
  gap: 28px;
  margin-left: 10px;
}
.bulk button {
  padding: 0;
  border: 0;
  background: none;
}

.tools {
  margin-top: 9px;
  padding: 4px 0 8px 4px;
  border: solid #000;
  border-width: 1px 0;
}
.tool-links {
  display: flex;
  align-items: center;
  height: 24px;
}
.tool-links .icon + a {
  margin: 0 6px 0 5px;
}
.tool-links .help-link {
  line-height: 11px;
}
.tool-links .help {
  display: block;
}
.add-form {
  display: flex;
  align-items: flex-start;
  height: 24px;
  line-height: 20px;
}
.add-form .icon {
  margin: 3px 5px 0 0;
}
.num {
  width: 51px;
  height: 22px;
  margin: 1px 6px 0 4px;
  font-size: 13px;
}
.fields {
  margin-right: 5px;
}
.add-form input[type="radio"] + label {
  margin-right: 6px;
}
.add-form .after {
  width: 115px;
  height: 21px;
  margin: 1px 9px 0 0;
  font-size: 14px;
}
.go {
  height: 21px;
  margin-top: 1px;
  padding: 0 6px;
  border: 1px solid #777;
  border-radius: 3px;
  background: linear-gradient(#f2f2f2 50%, #d8d8d8 50%);
  color: #000;
  font-family: inherit;
  font-size: 14px;
}
.go.small {
  height: 19px;
  margin: 2px 0 0 8px;
  font-size: 12px;
}

.stats {
  display: flex;
  align-items: flex-start;
  gap: 8px;
  margin-top: 9px;
}
.indexes tbody td {
  height: 16px;
}
.indexes .act .icon {
  margin-bottom: -1px;
}
.index-form {
  display: flex;
  align-items: flex-start;
  height: 25px;
}
.cols {
  width: 41px;
  height: 21px;
  margin: 2px 6px 0;
  font-size: 12px;
}

.end {
  margin: 15px 0;
  border: 0;
  border-top: 1px solid #5f9ea0;
}
.footer {
  display: flex;
  justify-content: flex-end;
  gap: 5px;
  margin-right: -36px;
  border-top: 1px solid #bbb;
  line-height: 20px;
}
.footer .icon {
  margin-top: 2px;
}
```
